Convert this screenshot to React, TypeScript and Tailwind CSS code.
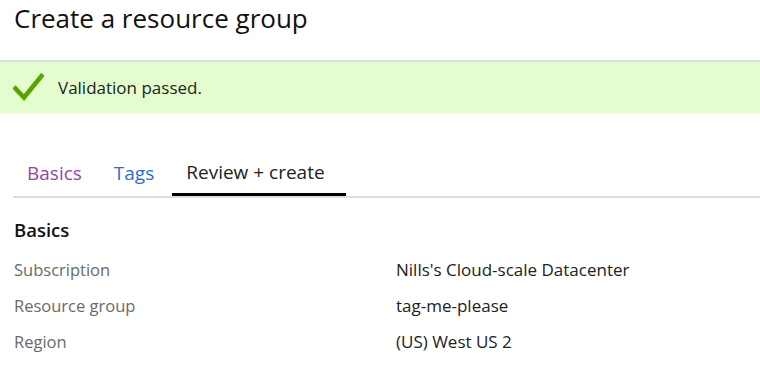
import React from "react";

const rows = [
  { label: "Subscription", value: "Nills's Cloud-scale Datacenter" },
  { label: "Resource group", value: "tag-me-please" },
  { label: "Region", value: "(US) West US 2" },
];

const tabs = [
  { name: "Basics", className: "text-[#9a3fb2]" },
  { name: "Tags", className: "text-[#1f6fe3]" },
  { name: "Review + create", className: "w-[174px] text-[#222] border-b-[3px] border-black" },
];

function CheckIcon() {
  return (
    <svg width="31" height="29" viewBox="0 0 31 29" className="shrink-0">
      <path d="M2.5 15.5 L11 24.5 L28.5 3" fill="none" stroke="#57a300" strokeWidth="4.5" strokeLinecap="square" />
    </svg>
  );
}

export default function App() {
  return (
    <div className="w-[760px] h-[382px] bg-white overflow-hidden font-['Open_Sans',sans-serif]">
      {/* header */}
      <div className="h-[60px] px-[14px] pt-[1px]">
        <h1 className="text-[26px] leading-[34px] text-[#111]">Create a resource group</h1>
      </div>

      {/* validation banner */}
      <div className="h-[53px] border-t-2 border-[#dcdcdc] bg-[#e4fdcf] flex items-center pl-[13px] gap-[14px]">
        <CheckIcon />
        <span className="text-[17px] text-[#222]">Validation passed.</span>
      </div>

      {/* tabs */}
      <div className="mt-[38px] ml-[13px] flex gap-[4px] border-b-2 border-[#dedede] h-[47px]">
        {tabs.map((t) => (
          <div key={t.name} className={`px-[14px] flex items-center text-[19px] ${t.className}`}>
            {t.name}
          </div>
        ))}
      </div>

      {/* details */}
      <div className="px-[14px] pt-[20px]">
        <h2 className="text-[18.5px] font-semibold text-[#111] leading-[24px]">Basics</h2>
        <div className="mt-[10px] flex flex-col">
          {rows.map((r) => (
            <div key={r.label} className="flex h-[36px] items-center">
              <div className="w-[382px] text-[16.5px] text-[#6a6a6a]">{r.label}</div>
              <div className="text-[17px] text-[#222]">{r.value}</div>
            </div>
          ))}
        </div>
      </div>
    </div>
  );
}
